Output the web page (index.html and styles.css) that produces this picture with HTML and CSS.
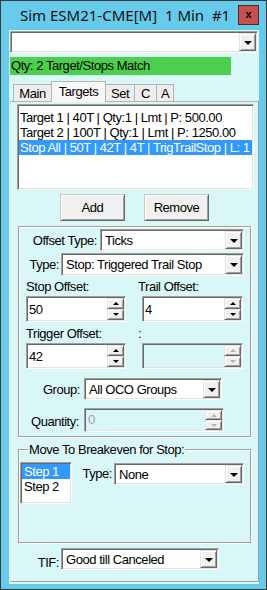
FILE: index.html
```html
<!DOCTYPE html>
<html>
<head>
<meta charset="utf-8">
<link rel="stylesheet" href="styles.css">
</head>
<body>
<div class="window">
  <div class="titlebar">
    <span class="title">Sim ESM21-CME[M]  1 Min  #1</span>
    <div class="close">x</div>
  </div>
  <div class="client">
    <div class="combo sunken top-combo"><span class="cval"></span><span class="dd raised"><i class="tri"></i></span></div>
    <div class="status">Qty: 2 Target/Stops Match</div>
    <div class="tabs">
      <div class="tab t-main">Main</div>
      <div class="tab t-targets sel">Targets</div>
      <div class="tab t-set">Set</div>
      <div class="tab t-c">C</div>
      <div class="tab t-a">A</div>
    </div>
    <div class="panel">
      <div class="listbox sunken">
        <div class="item">Target 1 | 40T | Qty:1 | Lmt | P: 500.00</div>
        <div class="item">Target 2 | 100T | Qty:1 | Lmt | P: 1250.00</div>
        <div class="item selected">Stop All | 50T | 42T | 4T | TrigTrailStop | L: 1</div>
      </div>
      <div class="buttons">
        <div class="btn">Add</div>
        <div class="btn">Remove</div>
      </div>
      <div class="group g1">
        <div class="row r-offtype">
          <span class="lbl l-offtype">Offset Type:</span>
          <div class="combo sunken c-offtype"><span class="cval">Ticks</span><span class="dd raised"><i class="tri"></i></span></div>
        </div>
        <div class="row r-type">
          <span class="lbl l-type">Type:</span>
          <div class="combo sunken c-type"><span class="cval">Stop: Triggered Trail Stop</span><span class="dd raised"><i class="tri"></i></span></div>
        </div>
        <div class="lblrow">
          <span class="collbl">Stop Offset:</span>
          <span class="collbl">Trail Offset:</span>
        </div>
        <div class="spinrow">
          <div class="spin sunken s-left"><span class="sval">50</span><span class="sbtns"><span class="sb raised"><i class="stri up"></i></span><span class="sb raised"><i class="stri down"></i></span></span></div>
          <div class="spin sunken s-right"><span class="sval">4</span><span class="sbtns"><span class="sb raised"><i class="stri up"></i></span><span class="sb raised"><i class="stri down"></i></span></span></div>
        </div>
        <div class="lblrow lblrow2">
          <span class="collbl">Trigger Offset:</span>
          <span class="collbl">:</span>
        </div>
        <div class="spinrow">
          <div class="spin sunken s-left"><span class="sval">42</span><span class="sbtns"><span class="sb raised"><i class="stri up"></i></span><span class="sb raised"><i class="stri down"></i></span></span></div>
          <div class="spin sunken s-right disabled"><span class="sval"></span><span class="sbtns"><span class="sb raised"><i class="stri up"></i></span><span class="sb raised"><i class="stri down"></i></span></span></div>
        </div>
        <div class="row r-group">
          <span class="lbl l-group">Group:</span>
          <div class="combo sunken c-group"><span class="cval">All OCO Groups</span><span class="dd raised"><i class="tri"></i></span></div>
        </div>
        <div class="row r-qty">
          <span class="lbl l-qty">Quantity:</span>
          <div class="spin sunken c-qty disabled"><span class="sval">0</span><span class="sbtns"><span class="sb raised"><i class="stri up"></i></span><span class="sb raised"><i class="stri down"></i></span></span></div>
        </div>
      </div>
      <fieldset class="group g2">
        <legend>Move To Breakeven for Stop:</legend>
        <div class="be-row">
          <div class="steps sunken">
            <div class="item selected">Step 1</div>
            <div class="item">Step 2</div>
          </div>
          <span class="lbl l-betype">Type:</span>
          <div class="combo sunken c-betype"><span class="cval">None</span><span class="dd raised"><i class="tri"></i></span></div>
        </div>
      </fieldset>
      <div class="row r-tif">
        <span class="lbl l-tif">TIF:</span>
        <div class="combo sunken c-tif"><span class="cval">Good till Canceled</span><span class="dd raised"><i class="tri"></i></span></div>
      </div>
    </div>
  </div>
</div>
</body>
</html>
```
FILE: styles.css
```css
* { box-sizing: border-box; }
html, body { margin: 0; padding: 0; }
body {
  width: 267px; height: 590px; overflow: hidden;
  font-family: "Liberation Sans", Arial, sans-serif;
  font-size: 13px; letter-spacing: -0.45px; color: #000;
  background: #66cbea;
}
.window {
  width: 267px; height: 590px;
  border: 1px solid #3a3a3a;
  background: #66cbea;
  display: flex; flex-direction: column;
}
.titlebar { height: 29px; display: flex; align-items: flex-start; padding-left: 19px; }
.title {
  font-family: "Noto Sans", sans-serif; font-size: 15px; line-height: 20px;
  letter-spacing: 0; margin-top: 4px; white-space: pre; color: #111;
}
.close {
  margin-left: auto; margin-right: 7px; margin-top: 4px;
  width: 21px; height: 20px; background: #c75050; border: 1px solid #4d2626;
  display: flex; align-items: center; justify-content: center;
  font: bold 11px "Liberation Sans", sans-serif; letter-spacing: 0; line-height: 11px; padding-bottom: 2px;
}
.client {
  flex: 1; margin: 0 7px 5px 8px; background: #daf7f7;
  padding: 1px 0 0 1px; display: flex; flex-direction: column;
}
.sunken {
  border: 1px solid; border-color: #a0a0a0 #ffffff #ffffff #a0a0a0;
  box-shadow: inset 1px 1px 0 #696969, inset -1px -1px 0 #e3e3e3;
  background: #fff;
}
.raised {
  background: #f0f0f0; border: 1px solid; border-color: #e3e3e3 #696969 #696969 #e3e3e3;
  box-shadow: inset 1px 1px 0 #fff, inset -1px -1px 0 #a0a0a0;
}
.combo { display: flex; padding: 1px; }
.cval { flex: 1; padding-left: 3px; display: flex; align-items: center; white-space: nowrap; overflow: hidden; }
.dd { width: 17px; display: flex; align-items: center; justify-content: center; }
.tri { display: block; width: 0; height: 0; border-left: 4px solid transparent; border-right: 4px solid transparent; border-top: 4px solid #000; margin-top: 1px; }
.top-combo { height: 22px; margin: 0 1px 0 0; }
.status {
  margin-top: 4px; width: 221px; height: 18px; background: #4ccf4c;
  line-height: 18px; padding-left: 1px;
}
.tabs { margin-top: 6px; height: 20px; display: flex; align-items: flex-end; padding-left: 3px; }
.tab {
  height: 17px; background: #eeeeee; border: 1px solid #b4b4b4; border-bottom: none;
  display: flex; align-items: center; justify-content: center; line-height: 15px;
}
.tab.sel { height: 21px; margin-bottom: -1px; background: #f7f7f7; position: relative; z-index: 1; padding-bottom: 2px; }
.t-main { width: 38px; border-right: none; }
.t-targets { width: 55px; }
.t-set { width: 29px; border-left: none; }
.t-c { width: 22px; border-left: none; }
.t-a { width: 17px; border-left: none; }
.panel {
  height: 481px; border: 1px solid; border-color: #b4b4b4 #a0a0a0 #a0a0a0 #e8e8e8;
  display: flex; flex-direction: column;
}
.listbox {
  margin: 2px 4px 0 6px; height: 86px; padding: 5px 1px 0 1px; overflow: hidden;
}
.item { height: 15px; line-height: 15px; padding-left: 1px; white-space: nowrap; overflow: hidden; }
.item.selected { background: #3399ff; color: #fff; }
.buttons { margin-top: 4px; height: 27px; display: flex; justify-content: center; gap: 19px; }
.btn {
  width: 65px; height: 27px; background: #f0f0f0;
  border: 1px solid; border-color: #c8c8c8 #696969 #696969 #c8c8c8;
  box-shadow: inset 1px 1px 0 #fff, inset -1px -1px 0 #a0a0a0;
  display: flex; align-items: center; justify-content: center;
}
.group {
  margin: 5px 0 0 7px; width: 233px;
  border: 1px solid #a0a0a0; box-shadow: 1px 1px 0 #fff, inset 1px 1px 0 #fff;
}
.g1 { height: 211px; display: flex; flex-direction: column; }
.row { display: flex; }
.lbl { text-align: right; white-space: nowrap; display: flex; align-items: center; justify-content: flex-end; }
.r-offtype { margin-top: 2px; height: 22px; }
.l-offtype { width: 78px; }
.c-offtype { margin-left: 3px; width: 144px; }
.r-type { margin-top: 2px; height: 23px; }
.l-type { width: 40px; }
.c-type { margin-left: 2px; width: 183px; }
.lblrow { margin-top: 3px; height: 16px; line-height: 16px; display: flex; padding-left: 7px; }
.lblrow2 { margin-top: 4px; }
.collbl { width: 116px; white-space: nowrap; }
.spinrow { margin-top: 1px; height: 26px; display: flex; padding-left: 7px; }
.spin { display: flex; padding: 1px; }
.s-left { width: 100px; }
.s-right { width: 101px; margin-left: 16px; }
.sval { flex: 1; display: flex; align-items: center; padding-left: 1px; }
.sbtns { width: 17px; display: flex; flex-direction: column; }
.sb { flex: 1; display: flex; align-items: center; justify-content: center; }
.stri { display: block; width: 0; height: 0; border-left: 3px solid transparent; border-right: 3px solid transparent; }
.stri.up { border-bottom: 3px solid #000; }
.stri.down { border-top: 3px solid #000; }
.disabled { background: #daf7f7; color: #a0a0a0; }
.disabled .stri.up { border-bottom-color: #b4b4b4; }
.disabled .stri.down { border-top-color: #b4b4b4; }
.r-group { margin-top: 9px; height: 22px; }
.l-group { width: 61px; }
.c-group { margin-left: 4px; width: 138px; }
.r-qty { margin-top: 8px; height: 24px; }
.l-qty { width: 60px; padding-top: 3px; }
.c-qty { margin-left: 5px; width: 140px; }
.c-qty .sval { padding-left: 2px; align-items: flex-start; padding-top: 2px; }
fieldset.g2 {
  margin-top: 5px; height: 101px; padding: 5px 0 0 1px; min-width: 0;
}
.g2 legend { margin-left: 8px; padding: 0 1px; line-height: 15px; height: 15px; }
.be-row { display: flex; align-items: flex-start; }
.steps { width: 52px; height: 42px; padding: 1px; }
.steps .item { padding-left: 2px; }
.l-betype { margin-left: 10px; width: 30px; height: 15px; margin-top: 4px; }
.c-betype { margin-left: 2px; margin-top: 1px; width: 130px; height: 22px; }
.r-tif { margin-top: 5px; height: 22px; }
.l-tif { width: 48px; padding-top: 6px; }
.c-tif { margin-left: 2px; width: 158px; }
```
